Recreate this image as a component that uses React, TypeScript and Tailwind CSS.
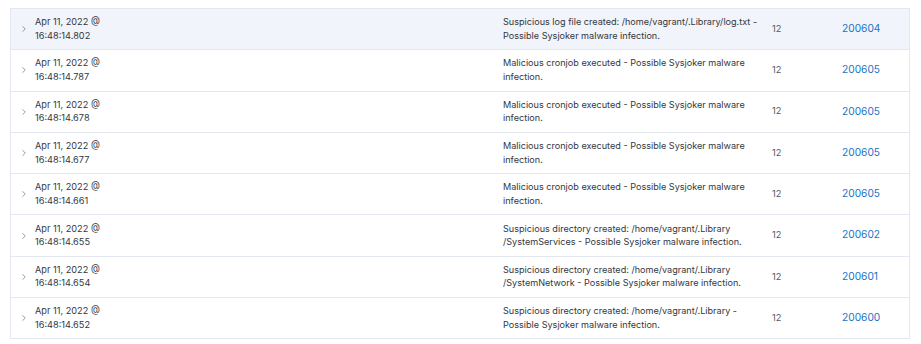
import { ChevronRight } from 'lucide-react';

interface LogRow {
  time: string;
  message: string[];
  count: number;
  ruleId: string;
}

const rows: LogRow[] = [
  {
    time: '16:48:14.802',
    message: ['Suspicious log file created: /home/vagrant/.Library/log.txt -', 'Possible Sysjoker malware infection.'],
    count: 12,
    ruleId: '200604',
  },
  {
    time: '16:48:14.787',
    message: ['Malicious cronjob executed - Possible Sysjoker malware', 'infection.'],
    count: 12,
    ruleId: '200605',
  },
  {
    time: '16:48:14.678',
    message: ['Malicious cronjob executed - Possible Sysjoker malware', 'infection.'],
    count: 12,
    ruleId: '200605',
  },
  {
    time: '16:48:14.677',
    message: ['Malicious cronjob executed - Possible Sysjoker malware', 'infection.'],
    count: 12,
    ruleId: '200605',
  },
  {
    time: '16:48:14.661',
    message: ['Malicious cronjob executed - Possible Sysjoker malware', 'infection.'],
    count: 12,
    ruleId: '200605',
  },
  {
    time: '16:48:14.655',
    message: ['Suspicious directory created: /home/vagrant/.Library', '/SystemServices - Possible Sysjoker malware infection.'],
    count: 12,
    ruleId: '200602',
  },
  {
    time: '16:48:14.654',
    message: ['Suspicious directory created: /home/vagrant/.Library', '/SystemNetwork - Possible Sysjoker malware infection.'],
    count: 12,
    ruleId: '200601',
  },
  {
    time: '16:48:14.652',
    message: ['Suspicious directory created: /home/vagrant/.Library -', 'Possible Sysjoker malware infection.'],
    count: 12,
    ruleId: '200600',
  },
];

const Row = ({ row, active }: { row: LogRow; active: boolean }) => {
  return (
    <div
      className={`flex h-[41.3px] items-center border-b border-[#e3e7ef] ${active ? 'bg-[#f1f4fa]' : 'bg-white'}`}
    >
      <div className="flex w-[24px] justify-center pl-[1px]">
        <ChevronRight size={10} strokeWidth={1.5} className="text-[#5a606b]" />
      </div>
      <div className="w-[468px] pb-[1px] leading-[13.5px] text-[9.2px] text-[#343741]">
        <div>Apr 11, 2022 @</div>
        <div>{row.time}</div>
      </div>
      <div className="w-[269px] pb-[1px] leading-[13.5px] text-[9.1px] text-[#343741]">
        {row.message.map((line, i) => (
          <div key={i} className="whitespace-nowrap">
            {line}
          </div>
        ))}
      </div>
      <div className="w-[70px] pb-[1px] text-[9.2px] text-[#535966]">{row.count}</div>
      <div className="pb-[1px] text-[10.2px] text-[#1a72c6]">{row.ruleId}</div>
    </div>
  );
};

export default function App() {
  return (
    <div className="h-[344px] w-[921px] bg-white pt-[8px] pl-[10px] font-['Inter',sans-serif]">
      <div className="w-[900px] border-t border-l border-r border-[#e3e7ef]">
        {rows.map((row, i) => (
          <Row key={i} row={row} active={i === 0} />
        ))}
      </div>
    </div>
  );
}
